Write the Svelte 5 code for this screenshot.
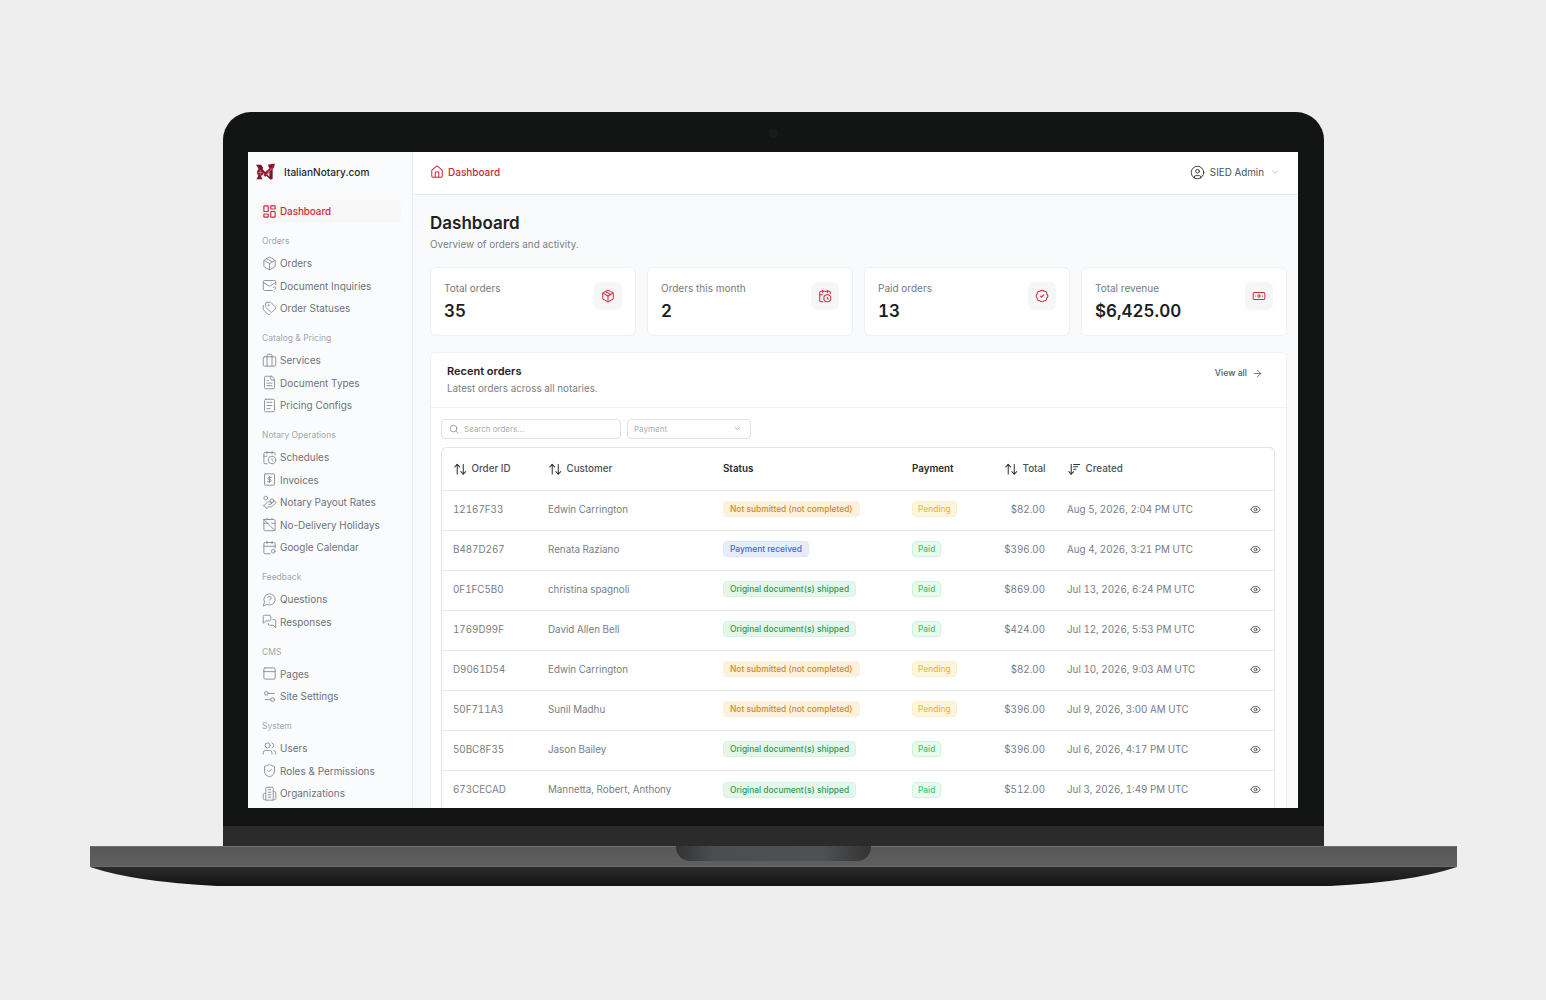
<script>
  const icons = {
    dashboard: '<rect x="3" y="3" width="7" height="9" rx="1"/><rect x="14" y="3" width="7" height="5" rx="1"/><rect x="14" y="12" width="7" height="9" rx="1"/><rect x="3" y="16" width="7" height="5" rx="1"/>',
    pkg: '<path d="M11 21.73a2 2 0 0 0 2 0l7-4A2 2 0 0 0 21 16V8a2 2 0 0 0-1-1.73l-7-4a2 2 0 0 0-2 0l-7 4A2 2 0 0 0 3 8v8a2 2 0 0 0 1 1.73z"/><path d="M12 22V12"/><path d="m3.3 7 8.7 5 8.7-5"/><path d="m7.5 4.27 9 5.15"/>',
    mail: '<path d="M22 10.5V6a2 2 0 0 0-2-2H4a2 2 0 0 0-2 2v12c0 1.1.9 2 2 2h12.5"/><path d="m22 7-8.97 5.7a1.94 1.94 0 0 1-2.06 0L2 7"/><path d="M18 15.28c.2-.4.5-.8.9-1a2.1 2.1 0 0 1 2.6.4c.3.4.5.8.5 1.3 0 1.3-2 2-2 2"/><path d="M20 22v.01"/>',
    tags: '<path d="M13.172 2a2 2 0 0 1 1.414.586l6.71 6.71a2.4 2.4 0 0 1 0 3.408l-4.592 4.592a2.4 2.4 0 0 1-3.408 0l-6.71-6.71A2 2 0 0 1 6 9.172V3a1 1 0 0 1 1-1z"/><path d="M2 7v6.172a2 2 0 0 0 .586 1.414l6.71 6.71a2.4 2.4 0 0 0 3.191.193"/><circle cx="10.5" cy="6.5" r=".5"/>',
    services: '<rect x="2" y="6" width="20" height="15" rx="2"/><path d="M16 6V4a2 2 0 0 0-2-2h-4a2 2 0 0 0-2 2v2"/><path d="M8 6v15"/><path d="M16 6v15"/>',
    file: '<path d="M15 2H6a2 2 0 0 0-2 2v16a2 2 0 0 0 2 2h12a2 2 0 0 0 2-2V7Z"/><path d="M14 2v4a2 2 0 0 0 2 2h4"/><path d="M10 9H8"/><path d="M16 13H8"/><path d="M16 17H8"/>',
    pricing: '<rect x="4" y="2" width="16" height="20" rx="2"/><path d="M8 7h8"/><path d="M8 12h8"/><path d="M8 17h5"/>',
    calclock: '<path d="M21 7.5V6a2 2 0 0 0-2-2H5a2 2 0 0 0-2 2v14a2 2 0 0 0 2 2h3.5"/><path d="M16 2v4"/><path d="M8 2v4"/><path d="M3 10h5"/><path d="M17.5 17.5 16 16.3V14"/><circle cx="16" cy="16" r="6"/>',
    invoice: '<rect x="4" y="3" width="16" height="18" rx="1"/><path d="M15 8.500h-4a1.750 1.750 0 0 0 0 3.500h2a1.750 1.750 0 0 1 0 3.500H9"/><path d="M12 7v10"/>',
    coins: '<path d="M11 15h2a2 2 0 1 0 0-4h-3c-.6 0-1.100.2-1.400.6L3 17"/><path d="m7 21 1.600-1.400c.3-.4.8-.6 1.400-.6h4c1.100 0 2.100-.4 2.800-1.200l4.600-4.400a2 2 0 0 0-2.750-2.910l-4.200 3.900"/><path d="m2 16 6 6"/><circle cx="16" cy="9" r="2.900"/><circle cx="6" cy="5" r="3"/>',
    caloff: '<path d="M3 4v16a2 2 0 0 0 2 2h14a2 2 0 0 0 2-2v-3"/><path d="M21 15.500V6a2 2 0 0 0-2-2H3"/><path d="M16 2v2"/><path d="M8 2v2"/><path d="M3 10h7"/><path d="M21 10h-5.500"/><path d="m3 4 18 18"/>',
    calcircle: '<path d="M8 2v4"/><path d="M16 2v4"/><path d="M21 13V6a2 2 0 0 0-2-2H5a2 2 0 0 0-2 2v14a2 2 0 0 0 2 2h8"/><path d="M3 10h18"/><circle cx="18" cy="18" r="3"/>',
    question: '<path d="M7.900 20A9 9 0 1 0 4 16.100L2 22Z"/><path d="M9.090 9a3 3 0 0 1 5.830 1c0 2-3 3-3 3"/><path d="M12 17h.01"/>',
    messages: '<path d="M14 9a2 2 0 0 1-2 2H6l-4 4V4a2 2 0 0 1 2-2h8a2 2 0 0 1 2 2z"/><path d="M18 9h2a2 2 0 0 1 2 2v11l-4-4h-6a2 2 0 0 1-2-2v-1"/>',
    panel: '<rect x="3" y="3" width="18" height="18" rx="2"/><path d="M3 9h18"/>',
    sliders: '<path d="M20 7h-9"/><path d="M14 17H5"/><circle cx="17" cy="17" r="3"/><circle cx="7" cy="7" r="3"/>',
    users: '<path d="M16 21v-2a4 4 0 0 0-4-4H6a4 4 0 0 0-4 4v2"/><path d="M16 3.128a4 4 0 0 1 0 7.744"/><path d="M22 21v-2a4 4 0 0 0-3-3.870"/><circle cx="9" cy="7" r="4"/>',
    shield: '<path d="M20 13c0 5-3.500 7.500-7.660 8.950a1 1 0 0 1-.67-.01C7.500 20.500 4 18 4 13V6a1 1 0 0 1 1-1c2 0 4.500-1.200 6.240-2.720a1.170 1.170 0 0 1 1.520 0C14.510 3.810 17 5 19 5a1 1 0 0 1 1 1z"/><path d="m9 12 2 2 4-4"/>',
    building: '<path d="M6 22V4a2 2 0 0 1 2-2h8a2 2 0 0 1 2 2v18Z"/><path d="M6 12H4a2 2 0 0 0-2 2v6a2 2 0 0 0 2 2h2"/><path d="M18 9h2a2 2 0 0 1 2 2v9a2 2 0 0 1-2 2h-2"/><path d="M10 6h4"/><path d="M10 10h4"/><path d="M10 14h4"/><path d="M10 18h4"/>',
    house: '<path d="M15 21v-8a1 1 0 0 0-1-1h-4a1 1 0 0 0-1 1v8"/><path d="M3 10a2 2 0 0 1 .709-1.528l7-5.999a2 2 0 0 1 2.582 0l7 5.999A2 2 0 0 1 21 10v9a2 2 0 0 1-2 2H5a2 2 0 0 1-2-2z"/>',
    user: '<circle cx="12" cy="12" r="10"/><circle cx="12" cy="10" r="3"/><path d="M7 20.662V19a2 2 0 0 1 2-2h6a2 2 0 0 1 2 2v1.662"/>',
    chevron: '<path d="m6 9 6 6 6-6"/>',
    badge: '<path d="M3.850 8.620a4 4 0 0 1 4.780-4.770 4 4 0 0 1 6.740 0 4 4 0 0 1 4.780 4.780 4 4 0 0 1 0 6.740 4 4 0 0 1-4.770 4.780 4 4 0 0 1-6.750 0 4 4 0 0 1-4.780-4.770 4 4 0 0 1 0-6.760Z"/><path d="m9 12 2 2 4-4"/>',
    banknote: '<rect x="2" y="6" width="20" height="12" rx="2"/><circle cx="12" cy="12" r="2"/><path d="M6 12h.01M18 12h.01"/>',
    arrow: '<path d="M5 12h14"/><path d="m12 5 7 7-7 7"/>',
    search: '<path d="m21 21-4.340-4.340"/><circle cx="11" cy="11" r="8"/>',
    sort: '<path d="m21 16-4 4-4-4"/><path d="M17 20V4"/><path d="m3 8 4-4 4 4"/><path d="M7 4v16"/>',
    sortdown: '<path d="m3 16 4 4 4-4"/><path d="M7 20V4"/><path d="M11 4h10"/><path d="M11 8h7"/><path d="M11 12h4"/>',
    eye: '<path d="M2.062 12.348a1 1 0 0 1 0-.696 10.750 10.750 0 0 1 19.876 0 1 1 0 0 1 0 .696 10.750 10.750 0 0 1-19.876 0"/><circle cx="12" cy="12" r="3"/>'
  };

  const nav = [
    { title: 'Orders', items: [['pkg', 'Orders'], ['mail', 'Document Inquiries'], ['tags', 'Order Statuses']] },
    { title: 'Catalog & Pricing', items: [['services', 'Services'], ['file', 'Document Types'], ['pricing', 'Pricing Configs']] },
    { title: 'Notary Operations', items: [['calclock', 'Schedules'], ['invoice', 'Invoices'], ['coins', 'Notary Payout Rates'], ['caloff', 'No-Delivery Holidays'], ['calcircle', 'Google Calendar']] },
    { title: 'Feedback', items: [['question', 'Questions'], ['messages', 'Responses']] },
    { title: 'CMS', items: [['panel', 'Pages'], ['sliders', 'Site Settings']] },
    { title: 'System', items: [['users', 'Users'], ['shield', 'Roles & Permissions'], ['building', 'Organizations']] }
  ];

  const stats = [
    { label: 'Total orders', value: '35', icon: 'pkg' },
    { label: 'Orders this month', value: '2', icon: 'calclock' },
    { label: 'Paid orders', value: '13', icon: 'badge' },
    { label: 'Total revenue', value: '$6,425.00', icon: 'banknote' }
  ];

  const statuses = {
    open: ['Not submitted (not completed)', 'st-open'],
    received: ['Payment received', 'st-received'],
    shipped: ['Original document(s) shipped', 'st-shipped']
  };

  const orders = [
    ['12167F33', 'Edwin Carrington', 'open', 'Pending', '$82.00', 'Aug 5, 2026, 2:04 PM UTC'],
    ['B487D267', 'Renata Raziano', 'received', 'Paid', '$396.00', 'Aug 4, 2026, 3:21 PM UTC'],
    ['0F1FC5B0', 'christina spagnoli', 'shipped', 'Paid', '$869.00', 'Jul 13, 2026, 6:24 PM UTC'],
    ['1769D99F', 'David Allen Bell', 'shipped', 'Paid', '$424.00', 'Jul 12, 2026, 5:53 PM UTC'],
    ['D9061D54', 'Edwin Carrington', 'open', 'Pending', '$82.00', 'Jul 10, 2026, 9:03 AM UTC'],
    ['50F711A3', 'Sunil Madhu', 'open', 'Pending', '$396.00', 'Jul 9, 2026, 3:00 AM UTC'],
    ['50BC8F35', 'Jason Bailey', 'shipped', 'Paid', '$396.00', 'Jul 6, 2026, 4:17 PM UTC'],
    ['673CECAD', 'Mannetta, Robert, Anthony', 'shipped', 'Paid', '$512.00', 'Jul 3, 2026, 1:49 PM UTC']
  ];
</script>

{#snippet icon(name, cls)}
  <svg class={cls} viewBox="0 0 24 24" fill="none" stroke="currentColor" stroke-linecap="round" stroke-linejoin="round">{@html icons[name]}</svg>
{/snippet}

<div class="page">
  <div class="lid">
    <span class="camera"></span>
    <div class="screen">
      <aside class="sidebar">
        <div class="brand">
          <svg class="logo" viewBox="0 0 22 18">
            <path d="M1 1.500h5.500l2 3L8 6l7 8V5l-1.500-3.500L21 0l-2.500 4v12l-2 1L6 8v5l2 3.500H1.500L3.500 13V5z" fill="#7d1626"/>
            <path d="M21 .5 10.500 9 9 13l2 1L20 4z" fill="#a81f35"/>
            <circle cx="5.500" cy="9.500" r="3.400" fill="#8c1a2c"/>
            <path d="M3 9.500h5M5.500 7v5" stroke="#e8c9cf" stroke-width=".5"/>
            <path d="M12 12l6-7" stroke="#e8c9cf" stroke-width=".5"/>
          </svg>
          <span>ItalianNotary.com</span>
        </div>
        <a class="item active" href="#top">
          {@render icon('dashboard', 'nav-icon')}
          <span>Dashboard</span>
        </a>
        {#each nav as group}
          <div class="group-title">{group.title}</div>
          {#each group.items as [name, label]}
            <a class="item" href="#top">
              {@render icon(name, 'nav-icon')}
              <span>{label}</span>
            </a>
          {/each}
        {/each}
      </aside>

      <div class="main">
        <header class="topbar">
          <div class="crumb">
            {@render icon('house', 'crumb-icon')}
            <span>Dashboard</span>
          </div>
          <div class="account">
            {@render icon('user', 'user-icon')}
            <span>SIED Admin</span>
            {@render icon('chevron', 'account-chevron')}
          </div>
        </header>

        <div class="content">
          <h1>Dashboard</h1>
          <p class="lead">Overview of orders and activity.</p>

          <div class="stats">
            {#each stats as stat}
              <div class="stat">
                <div>
                  <div class="stat-label">{stat.label}</div>
                  <div class="stat-value">{stat.value}</div>
                </div>
                <div class="stat-icon">{@render icon(stat.icon, 'stat-glyph')}</div>
              </div>
            {/each}
          </div>

          <section class="panel">
            <div class="panel-head">
              <div>
                <h2>Recent orders</h2>
                <p>Latest orders across all notaries.</p>
              </div>
              <a class="view-all" href="#top">View all {@render icon('arrow', 'view-arrow')}</a>
            </div>

            <div class="panel-body">
              <div class="toolbar">
                <div class="search">
                  {@render icon('search', 'search-icon')}
                  <span>Search orders...</span>
                </div>
                <div class="select">
                  <span>Payment</span>
                  {@render icon('chevron', 'select-chevron')}
                </div>
              </div>

              <div class="table-wrap">
                <table>
                  <colgroup>
                    <col class="c-id" /><col class="c-customer" /><col class="c-status" /><col class="c-payment" /><col class="c-total" /><col class="c-created" /><col class="c-action" />
                  </colgroup>
                  <thead>
                    <tr>
                      <th class="sortable"><span class="th">{@render icon('sort', 'sort-icon')}Order ID</span></th>
                      <th class="sortable"><span class="th">{@render icon('sort', 'sort-icon')}Customer</span></th>
                      <th>Status</th>
                      <th>Payment</th>
                      <th class="sortable num"><span class="th">{@render icon('sort', 'sort-icon')}Total</span></th>
                      <th class="sortable"><span class="th">{@render icon('sortdown', 'sort-icon')}Created</span></th>
                      <th></th>
                    </tr>
                  </thead>
                  <tbody>
                    {#each orders as [id, customer, status, payment, total, created]}
                      <tr>
                        <td>{id}</td>
                        <td>{customer}</td>
                        <td><span class="pill {statuses[status][1]}">{statuses[status][0]}</span></td>
                        <td><span class="pill pay {payment === 'Paid' ? 'pay-paid' : 'pay-pending'}">{payment}</span></td>
                        <td class="num">{total}</td>
                        <td>{created}</td>
                        <td class="action">{@render icon('eye', 'eye-icon')}</td>
                      </tr>
                    {/each}
                  </tbody>
                </table>
              </div>
            </div>
          </section>
        </div>
      </div>
    </div>
    <div class="chin"></div>
    <div class="hinge"></div>
  </div>
  <div class="base">
    <div class="deck"></div>
    <div class="underside"></div>
    <span class="notch"></span>
  </div>
</div>

<style>
  :global(body) {
    margin: 0;
    background: #eeeeee;
  }

  .page {
    display: flex;
    flex-direction: column;
    align-items: center;
    height: 1000px;
    box-sizing: border-box;
    padding: 112px 0 0 1px;
    font-family: Inter, 'Liberation Sans', sans-serif;
    color: #6b7280;
    overflow: hidden;
  }

  /* laptop shell */
  .lid {
    position: relative;
    width: 1101px;
    box-sizing: border-box;
    padding-top: 40px;
    background: #131514;
    border-radius: 28px 28px 0 0;
  }

  .camera {
    position: absolute;
    top: 17px;
    left: 546px;
    width: 9px;
    height: 9px;
    border-radius: 50%;
    background: #1a1c1c;
  }

  .chin {
    height: 18px;
  }

  .hinge {
    height: 20px;
    background: #2b2b2b;
  }

  .base {
    position: relative;
    width: 1367px;
  }

  .deck {
    height: 21px;
    background: linear-gradient(#585858, #5f5f5f);
    border-top: 1px solid #6e6e6e;
    border-bottom: 1px solid #6a6a6a;
    box-sizing: border-box;
  }

  .underside {
    height: 19px;
    background: linear-gradient(#2c2c2c, #131313);
    clip-path: path('M0 0H1367Q1322 15 1240 19H127Q45 15 0 0Z');
  }

  .notch {
    position: absolute;
    top: 0;
    left: 586px;
    width: 195px;
    height: 15px;
    border-radius: 0 0 14px 14px;
    background: linear-gradient(90deg, #333333, #4b4e51 20%, #4e5154 75%, #333333);
  }

  /* screen */
  .screen {
    display: flex;
    width: 1050px;
    height: 656px;
    margin-left: 25px;
    overflow: hidden;
    background: #f9fafb;
  }

  .sidebar {
    flex: none;
    width: 165px;
    box-sizing: border-box;
    padding: 0 11px 0 9px;
    background: #fafbfc;
    border-right: 1px solid #e8eaed;
  }

  .brand {
    display: flex;
    align-items: center;
    gap: 8px;
    height: 48px;
    margin-left: -2px;
    padding-bottom: 8px;
    box-sizing: border-box;
    font-size: 10.1px;
    font-weight: 500;
    color: #27292e;
  }

  .logo {
    width: 21px;
    height: 18px;
    flex: none;
  }

  .item {
    display: flex;
    align-items: center;
    gap: 3.5px;
    height: 22.5px;
    padding-left: 4.5px;
    font-size: 9.95px;
    color: #6e7278;
    text-decoration: none;
    border-radius: 4px;
  }

  .item.active {
    color: #c92a3a;
    font-size: 9.8px;
    font-weight: 500;
    background: #f8f8f9;
  }

  :global(.nav-icon) {
    width: 15px;
    height: 15px;
    flex: none;
    stroke-width: 1.5;
    color: #8b8f96;
  }

  .item.active :global(.nav-icon) {
    color: #c92a3a;
    stroke-width: 1.9;
  }

  .group-title {
    height: 17px;
    line-height: 17px;
    margin: 10.7px 0 1.8px 5px;
    font-size: 8.5px;
    color: #a2a7af;
  }

  .main {
    flex: 1;
    min-width: 0;
  }

  .topbar {
    display: flex;
    align-items: center;
    justify-content: space-between;
    height: 43px;
    box-sizing: border-box;
    padding: 0 18px 2px 17px;
    background: #ffffff;
    border-bottom: 1px solid #e6e8eb;
  }

  .crumb {
    display: flex;
    align-items: center;
    gap: 4px;
    font-size: 10px;
    font-weight: 500;
    color: #c92a3a;
  }

  :global(.crumb-icon) {
    width: 14px;
    height: 14px;
    stroke-width: 1.75;
  }

  .account {
    display: flex;
    align-items: center;
    gap: 5px;
    font-size: 9.8px;
    color: #4b5058;
  }

  :global(.user-icon) {
    width: 15px;
    height: 15px;
    stroke-width: 1.5;
    color: #33363b;
  }

  :global(.account-chevron) {
    width: 10px;
    height: 10px;
    margin-left: 1px;
    stroke-width: 1.5;
    color: #8f949b;
  }

  .content {
    padding: 15.5px 11px 0 17px;
  }

  h1 {
    margin: 0;
    font-size: 17px;
    line-height: 24px;
    font-weight: 600;
    color: #1f2125;
  }

  .lead {
    margin: 2px 0 0;
    font-size: 9.9px;
    line-height: 14px;
    color: #7b8087;
  }

  .stats {
    display: grid;
    grid-template-columns: repeat(4, 1fr);
    gap: 11px;
    margin-top: 16.5px;
  }

  .stat {
    display: flex;
    justify-content: space-between;
    height: 69px;
    box-sizing: border-box;
    padding: 12px 13px 0;
    background: #ffffff;
    border: 1px solid #eef0f2;
    border-radius: 6px;
  }

  .stat-label {
    margin-top: 1px;
    font-size: 10px;
    line-height: 14px;
    color: #75797f;
  }

  .stat-value {
    margin-top: 5px;
    font-size: 17px;
    line-height: 22px;
    font-weight: 600;
    font-variant-numeric: tabular-nums;
    color: #1c1e21;
  }

  .stat-icon {
    display: flex;
    align-items: center;
    justify-content: center;
    width: 28px;
    height: 28px;
    margin-top: 2px;
    border-radius: 6px;
    background: #f6f6f7;
    color: #d02b3d;
  }

  :global(.stat-glyph) {
    width: 14px;
    height: 14px;
    stroke-width: 1.75;
  }

  .panel {
    margin-top: 16px;
    background: #ffffff;
    border: 1px solid #eef0f2;
    border-radius: 6px 6px 0 0;
  }

  .panel-head {
    display: flex;
    justify-content: space-between;
    height: 55px;
    box-sizing: border-box;
    padding: 11px 23px 0 16px;
    border-bottom: 1px solid #eef0f2;
  }

  h2 {
    margin: 0;
    font-size: 11px;
    line-height: 15px;
    font-weight: 600;
    color: #1f2125;
  }

  .panel-head p {
    margin: 3px 0 0;
    font-size: 9.8px;
    line-height: 14px;
    color: #7b8087;
  }

  .view-all {
    display: flex;
    align-items: center;
    gap: 5px;
    height: 18px;
    font-size: 8.7px;
    font-weight: 500;
    color: #54585f;
    text-decoration: none;
  }

  :global(.view-arrow) {
    width: 11px;
    height: 11px;
    stroke-width: 1.75;
  }

  .panel-body {
    padding: 11px 11px 0 10px;
  }

  .toolbar {
    display: flex;
    gap: 6px;
  }

  .search,
  .select {
    display: flex;
    align-items: center;
    height: 19.5px;
    box-sizing: border-box;
    font-size: 8px;
    color: #a9adb3;
    background: #ffffff;
    border: 1px solid #dfe2e6;
    border-radius: 4px;
  }

  .search {
    gap: 5px;
    width: 180px;
    padding-left: 7px;
  }

  :global(.search-icon) {
    width: 10px;
    height: 10px;
    stroke-width: 1.75;
    color: #80858c;
  }

  .select {
    justify-content: space-between;
    width: 124px;
    padding: 0 8px 0 6px;
  }

  :global(.select-chevron) {
    width: 9px;
    height: 9px;
    stroke-width: 1.75;
    color: #80858c;
  }

  .table-wrap {
    margin-top: 8.5px;
    border: 1px solid #e2e4e8;
    border-bottom: 0;
    border-radius: 6px 6px 0 0;
  }

  table {
    width: 100%;
    table-layout: fixed;
    border-collapse: collapse;
  }

  .c-id { width: 95px; }
  .c-customer { width: 175px; }
  .c-status { width: 189px; }
  .c-payment { width: 92px; }
  .c-total { width: 63px; }
  .c-created { width: 179px; }

  th {
    height: 42px;
    box-sizing: border-box;
    padding: 0 11px;
    text-align: left;
    font-size: 9.8px;
    font-weight: 600;
    color: #26282c;
  }

  th.sortable {
    font-weight: 500;
    color: #4b4f56;
  }

  .th {
    display: inline-flex;
    align-items: center;
    gap: 4px;
    vertical-align: middle;
  }

  :global(.sort-icon) {
    width: 14.5px;
    height: 14.5px;
    stroke-width: 1.75;
    color: #33363b;
  }

  td {
    height: 40px;
    box-sizing: border-box;
    padding: 0 11px 1.5px;
    border-top: 1px solid #e8eaed;
    font-size: 9.8px;
    font-variant-numeric: tabular-nums;
    color: #787d84;
    white-space: nowrap;
  }

  .num {
    text-align: right;
  }

  th.num .th {
    justify-content: flex-end;
  }

  .action {
    text-align: center;
    padding: 0 0 2px 1px;
  }

  :global(.eye-icon) {
    display: inline-block;
    vertical-align: middle;
    width: 11px;
    height: 11px;
    stroke-width: 1.75;
    color: #3a3d42;
  }

  .pill {
    display: inline-block;
    vertical-align: middle;
    height: 16px;
    line-height: 14px;
    box-sizing: border-box;
    padding: 0 6px;
    font-size: 8.4px;
    font-weight: 500;
    border: 1px solid transparent;
    border-radius: 4px;
  }

  .pill.pay {
    padding: 0 5px;
    font-size: 8.4px;
  }

  .st-open { background: #fdf1dc; border-color: #fdf0d8; color: #c98b30; }
  .st-received { background: #e5edfb; border-color: #dde7fa; color: #3d68d8; }
  .st-shipped { background: #e4f7ea; border-color: #d8f3e1; color: #2f9a58; }
  .pay-pending { background: #fef6dc; border-color: #fcefc8; color: #f0b63f; }
  .pay-paid { background: #e9faf0; border-color: #cff2dd; color: #3acb78; }
</style>
